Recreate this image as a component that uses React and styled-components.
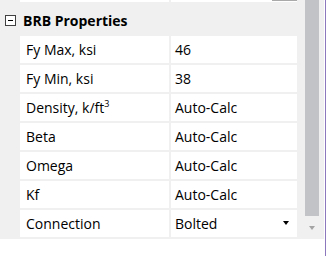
import React from "react";
import styled, { createGlobalStyle } from "styled-components";

const Global = createGlobalStyle`
  html, body { margin: 0; padding: 0; background: #ffffff; }
  body { font-family: "Open Sans", "Noto Sans", sans-serif; }
`;

const Frame = styled.div`
  width: 329px;
  height: 256px;
  display: flex;
  background: #ffffff;
  overflow: hidden;
`;

const Panel = styled.div`
  width: 324px;
  display: flex;
  flex-direction: column;
`;

const PanelBody = styled.div`
  display: flex;
  height: 239px;
  background: #f0f0f0;
`;

const Grid = styled.div`
  width: 297px;
  display: flex;
  flex-direction: column;
`;

const Row = styled.div`
  display: flex;
  height: ${(p) => p.$h || 27}px;
  border-bottom: ${(p) => (p.$noLine ? 0 : 2)}px solid #f0f0f0;
  padding-left: 20px;
`;

const Label = styled.div`
  width: 151px;
  background: #ffffff;
  border-right: 2px solid #f0f0f0;
  display: flex;
  align-items: center;
  padding-left: 6px;
  padding-bottom: 1px;
  box-sizing: border-box;
  font-size: 14px;
  color: #000;
  white-space: nowrap;
`;

const Value = styled.div`
  flex: 1;
  background: #ffffff;
  display: flex;
  align-items: center;
  justify-content: space-between;
  padding-left: 4px;
  padding-right: 7px;
  padding-bottom: 1px;
  font-size: 14px;
  color: #000;
  white-space: nowrap;
`;

const Sup = styled.sup`
  font-size: 9px;
  vertical-align: 6px;
  line-height: 0;
`;

const TopBox = styled.div`
  width: 25px;
  height: 100%;
  box-sizing: border-box;
  margin-right: -7px;
  border: 1px solid #a9a9a9;
  border-top: 0;
  background: #f0f0f0;
`;

const Header = styled.div`
  height: 34px;
  box-sizing: border-box;
  padding-top: 2px;
  display: flex;
  align-items: center;
  padding-left: 5px;
  gap: 7px;
  font-size: 14px;
  font-weight: 700;
  color: #000;
`;

const Toggle = styled.div`
  width: 11px;
  height: 11px;
  box-sizing: border-box;
  border: 1px solid #404040;
  background: #ffffff;
  display: flex;
  align-items: center;
  justify-content: center;
  &::after {
    content: "";
    width: 5px;
    height: 1px;
    background: #000;
  }
`;

const Caret = styled.div`
  width: 0;
  height: 0;
  margin-right: 1px;
  border-left: 3.5px solid transparent;
  border-right: 3.5px solid transparent;
  border-top: 4px solid #000;
`;

const ScrollBar = styled.div`
  flex: 1;
  display: flex;
  flex-direction: column;
  padding-left: 8px;
  padding-right: 5px;
`;

const Thumb = styled.div`
  height: 216px;
  background: #c2c3c6;
`;

const DownBtn = styled.div`
  flex: 1;
  display: flex;
  justify-content: center;
  padding-top: 10px;
  &::after {
    content: "";
    width: 0;
    height: 0;
    border-left: 3.5px solid transparent;
    border-right: 3.5px solid transparent;
    border-top: 4px solid #a3a3a3;
  }
`;

const Edge = styled.div`
  width: 1px;
  margin-left: 1px;
  background: #8c79bd;
`;

const rows = [
  ["Fy Max, ksi", "46"],
  ["Fy Min, ksi", "38"],
  [
    <span>
      Density, k/ft<Sup>3</Sup>
    </span>,
    "Auto-Calc",
  ],
  ["Beta", "Auto-Calc"],
  ["Omega", "Auto-Calc"],
  ["Kf", "Auto-Calc"],
  ["Connection", "Bolted", true],
];

export default function App() {
  return (
    <>
      <Global />
      <Frame>
        <Panel>
          <PanelBody>
            <Grid>
              <Row $h={2} $noLine>
                <Label />
                <Value>
                  <span />
                  <TopBox />
                </Value>
              </Row>
              <Header>
                <Toggle />
                BRB Properties
              </Header>
              {rows.map(([l, v, dd], i) => (
                <Row key={i}>
                  <Label>{l}</Label>
                  <Value>
                    <span>{v}</span>
                    {dd && <Caret />}
                  </Value>
                </Row>
              ))}
            </Grid>
            <ScrollBar>
              <Thumb />
              <DownBtn />
            </ScrollBar>
          </PanelBody>
        </Panel>
        <Edge />
      </Frame>
    </>
  );
}
